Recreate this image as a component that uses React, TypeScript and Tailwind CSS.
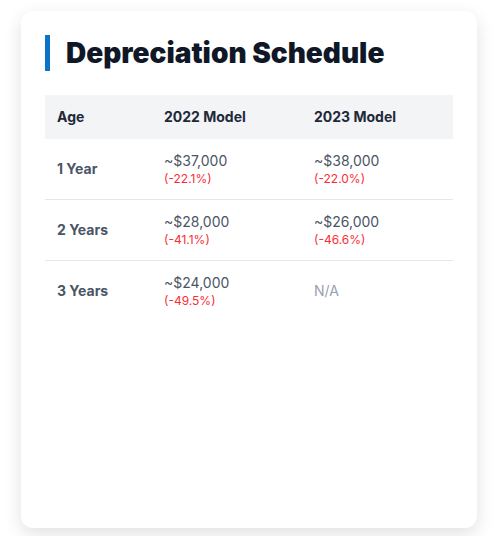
const rows = [
  { age: "1 Year", m22: "~$37,000", p22: "(-22.1%)", m23: "~$38,000", p23: "(-22.0%)" },
  { age: "2 Years", m22: "~$28,000", p22: "(-41.1%)", m23: "~$26,000", p23: "(-46.6%)" },
  { age: "3 Years", m22: "~$24,000", p22: "(-49.5%)", m23: null, p23: null },
];

export default function App() {
  return (
    <div className="min-h-screen bg-white pl-[21px] pt-[11px]" style={{ fontFamily: "Inter, 'Noto Sans', sans-serif" }}>
      <div className="w-[456px] h-[517px] rounded-xl bg-white p-6 shadow-[0_6px_18px_rgba(0,0,0,0.12)]">
        {/* title */}
        <h2 className="border-l-[5px] border-[#0b74c6] pl-4 text-[28px] leading-9 font-black text-gray-900 mb-6">
          Depreciation Schedule
        </h2>

        <table className="w-full text-left text-sm">
          <thead>
            <tr className="bg-gray-100">
              <th className="w-[107px] px-3 py-3 font-bold text-gray-800">Age</th>
              <th className="w-[150px] px-3 py-3 font-bold text-gray-800">2022 Model</th>
              <th className="px-3 py-3 font-bold text-gray-800">2023 Model</th>
            </tr>
          </thead>
          <tbody>
            {rows.map((r, i) => (
              <tr key={r.age} className={i < rows.length - 1 ? "border-b border-gray-200" : ""}>
                <td className="px-3 py-3 font-bold text-gray-600">{r.age}</td>
                <td className="px-3 py-3 text-gray-600">
                  <div>{r.m22}</div>
                  <div className="text-xs text-red-500">{r.p22}</div>
                </td>
                <td className="px-3 py-3 text-gray-600">
                  {r.m23 ? (
                    <>
                      <div>{r.m23}</div>
                      <div className="text-xs text-red-500">{r.p23}</div>
                    </>
                  ) : (
                    <span className="text-gray-400">N/A</span>
                  )}
                </td>
              </tr>
            ))}
          </tbody>
        </table>
      </div>
    </div>
  );
}
